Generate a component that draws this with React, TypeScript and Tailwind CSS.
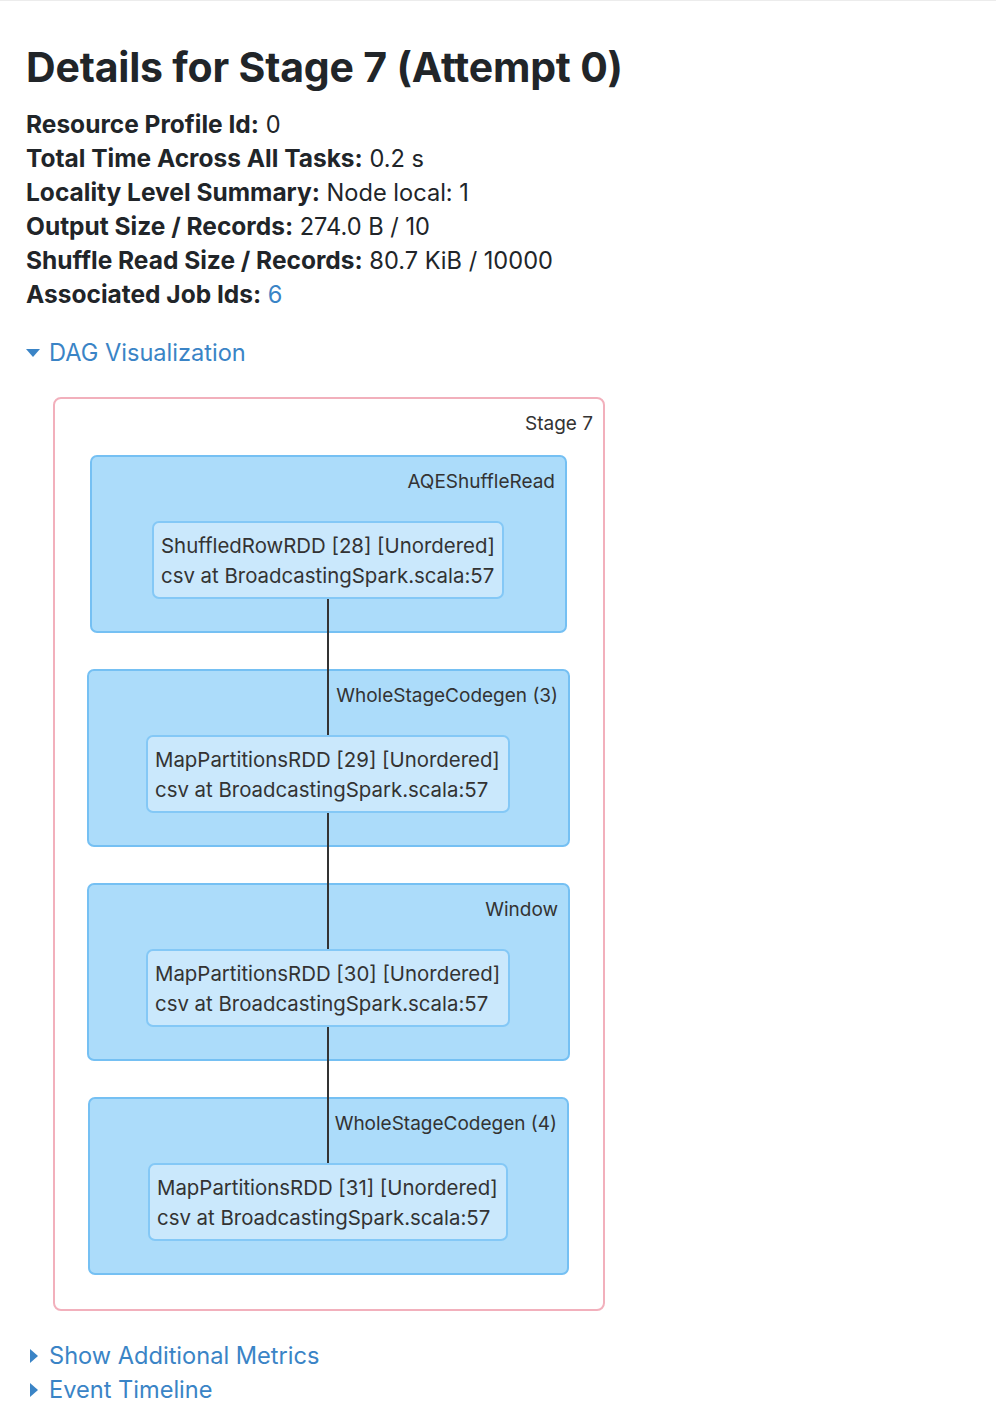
import React from 'react';

const FONT = { fontFamily: 'Inter, "Noto Sans", "Liberation Sans", sans-serif' };

interface Cluster {
  label: string;
  left: number;
  top: number;
  width: number;
  node: { left: number; width: number; title: string };
}

// positions are relative to the stage box
const clusters: Cluster[] = [
  { label: 'AQEShuffleRead', left: 37, top: 58, width: 477, node: { left: 99, width: 352, title: 'ShuffledRowRDD [28] [Unordered]' } },
  { label: 'WholeStageCodegen (3)', left: 34, top: 272, width: 483, node: { left: 93, width: 364, title: 'MapPartitionsRDD [29] [Unordered]' } },
  { label: 'Window', left: 34, top: 486, width: 483, node: { left: 93, width: 364, title: 'MapPartitionsRDD [30] [Unordered]' } },
  { label: 'WholeStageCodegen (4)', left: 35, top: 700, width: 481, node: { left: 95, width: 360, title: 'MapPartitionsRDD [31] [Unordered]' } },
];

const summary: [string, React.ReactNode][] = [
  ['Resource Profile Id:', '0'],
  ['Total Time Across All Tasks:', '0.2 s'],
  ['Locality Level Summary:', 'Node local: 1'],
  ['Output Size / Records:', '274.0 B / 10'],
  ['Shuffle Read Size / Records:', '80.7 KiB / 10000'],
  ['Associated Job Ids:', <a key="job" className="text-[#3a84c6]">6</a>],
];

const Triangle: React.FC<{ open?: boolean }> = ({ open }) =>
  open ? (
    <svg width="14" height="9" viewBox="0 0 14 9" className="mr-[9px]">
      <path d="M0 0 H14 L7 8 Z" fill="#3a84c6" />
    </svg>
  ) : (
    <svg width="8" height="14" viewBox="0 0 8 14" className="ml-[4px] mr-[11px]">
      <path d="M0 0 L8 7 L0 14 Z" fill="#3a84c6" />
    </svg>
  );

const StageDag: React.FC = () => (
  <div className="relative w-[552px] h-[914px] border-2 border-[#f2b0bc] rounded-lg bg-white ml-[53px]">
    <div className="absolute right-[10px] top-[12px] text-[19px] leading-[26px] text-[#333]">Stage 7</div>
    {clusters.map((c) => (
      <div
        key={c.label}
        className="absolute h-[178px] rounded-[7px] border-2 border-[#75c0f3] bg-[#acdcfa]"
        style={{ left: c.left - 2, top: c.top - 2, width: c.width }}
      >
        <div className="absolute right-[10px] top-[12px] text-[19px] leading-[26px] text-[#333]">{c.label}</div>
      </div>
    ))}
    {/* edges */}
    {[202, 416, 630].map((t) => (
      <div key={t} className="absolute left-[272px] w-[2px] h-[136px] bg-[#333]" style={{ top: t - 2 }} />
    ))}
    {clusters.map((c) => (
      <div
        key={c.node.title}
        className="absolute h-[78px] rounded-[7px] border-2 border-[#84c8f6] bg-[#cae8fc] pl-[7px] pt-[8px] text-[20.4px] leading-[30px] text-[#333]"
        style={{ left: c.node.left - 2, top: c.top + 66 - 2, width: c.node.width }}
      >
        <div className="whitespace-nowrap">{c.node.title}</div>
        <div className="whitespace-nowrap">csv at BroadcastingSpark.scala:57</div>
      </div>
    ))}
  </div>
);

export default function App() {
  return (
    <div className="min-h-[1424px] w-[996px] bg-white border-t border-[#ececec] text-[#212529]" style={FONT}>
      <div className="pl-[26px] pt-[42px]">
        <h3 className="text-[41px] leading-[49px] font-bold tracking-[-0.2px] text-[#212529]">Details for Stage 7 (Attempt 0)</h3>
        <ul className="mt-[16px] text-[23.6px] leading-[34px]">
          {summary.map(([k, v]) => (
            <li key={k} className="whitespace-nowrap h-[34px]">
              <strong className="font-bold text-[24.5px] leading-none">{k}</strong> {v}
            </li>
          ))}
        </ul>
        <div className="mt-[24px] flex items-center text-[23.6px] leading-[34px] text-[#3a84c6]">
          <Triangle open />
          <span>DAG Visualization</span>
        </div>
      </div>
      <div className="mt-[27px]">
        <StageDag />
      </div>
      <div className="pl-[26px] mt-[28px] text-[23.6px] leading-[34px] text-[#3a84c6]">
        <div className="flex items-center">
          <Triangle />
          <span>Show Additional Metrics</span>
        </div>
        <div className="flex items-center">
          <Triangle />
          <span>Event Timeline</span>
        </div>
      </div>
    </div>
  );
}
